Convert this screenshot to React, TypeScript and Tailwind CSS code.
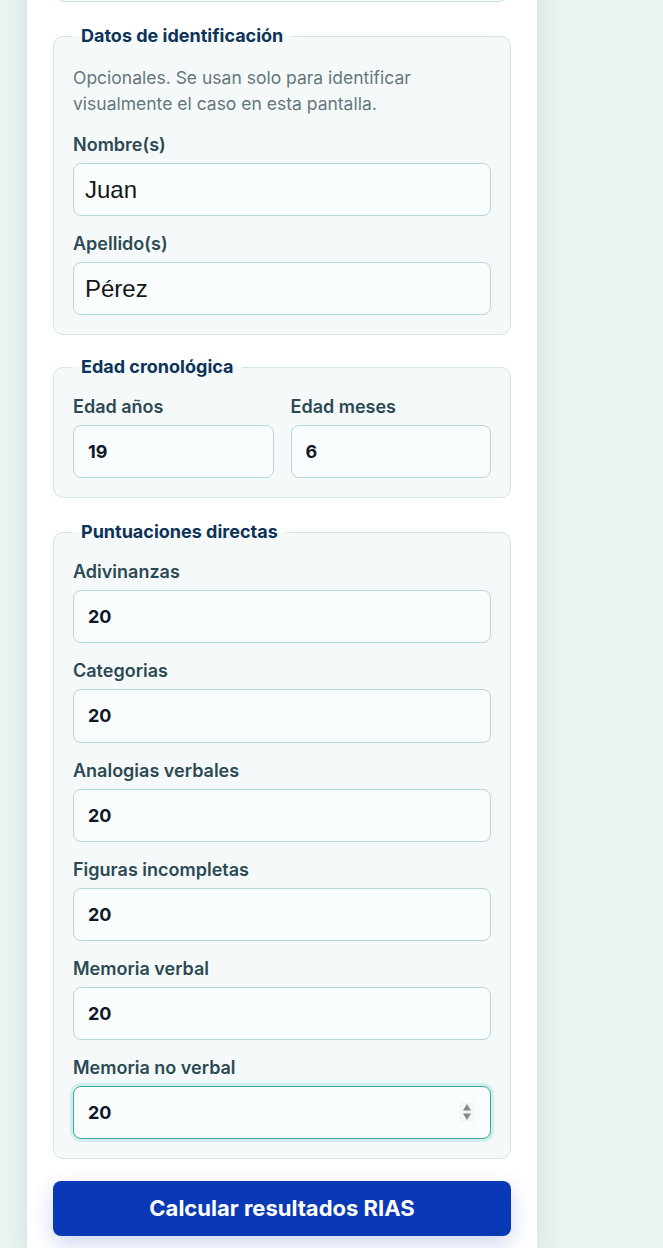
import React from "react";

const sans = { fontFamily: "Inter, 'Noto Sans', sans-serif" };

function Legend({ children }: { children: React.ReactNode }) {
  return (
    <legend className="px-2 text-[18px] leading-6 font-bold text-[#0d3358]">
      {children}
    </legend>
  );
}

function Label({ children }: { children: React.ReactNode }) {
  return (
    <label className="block text-[18px] leading-6 font-semibold text-[#2c4a53] mb-1.5">
      {children}
    </label>
  );
}

function NumInput({ value, focused }: { value: string; focused?: boolean }) {
  if (focused) {
    return (
      <div className="relative">
        <input
          readOnly
          value={value}
          className="block w-full h-[53.2px] rounded-lg border border-[#3aa7a3] bg-[#fafdfd] px-[14px] text-[18px] font-bold text-[#111827] outline-none ring-[3px] ring-[#d2eeed]"
          style={sans}
        />
        <div className="absolute right-[17px] top-[16px] flex h-[20px] w-[14px] items-center justify-center bg-[#f4f6f6]">
          <svg width="10" height="18" viewBox="0 0 10 18">
            <path d="M5 1 L9 7.5 H1 Z" fill="#8a8a8a" />
            <path d="M5 17 L9 10.5 H1 Z" fill="#8a8a8a" />
          </svg>
        </div>
      </div>
    );
  }
  return (
    <input
      readOnly
      value={value}
      className="block w-full h-[53.2px] rounded-lg border border-[#b5d8d8] bg-[#fafdfd] px-[14px] text-[18px] font-bold text-[#111827] outline-none"
      style={sans}
    />
  );
}

function TextInput({ value }: { value: string }) {
  return (
    <input
      readOnly
      value={value}
      className="block w-full h-[53px] rounded-lg border border-[#b5d8d8] bg-[#fafdfd] px-[11px] text-[24px] text-[#161616] outline-none"
      style={{ fontFamily: "'Liberation Sans', Arial, sans-serif" }}
    />
  );
}

const scores = [
  "Adivinanzas",
  "Categorias",
  "Analogias verbales",
  "Figuras incompletas",
  "Memoria verbal",
  "Memoria no verbal",
];

export default function App() {
  return (
    <div className="min-h-screen bg-[#eaf3f2] overflow-hidden" style={sans}>
      <div className="ml-[27px] w-[510px] min-h-[1300px] bg-white px-[26px] shadow-[0_0_24px_rgba(20,70,80,0.10)]">
        <div className="mx-[4px] -mt-[38px] h-[40px] rounded-lg border border-[#bfe0de] bg-[#fafdfd]" />

        <div className="mt-[22px] flex flex-col">
          <fieldset className="rounded-[10px] border border-[#d3e6e6] bg-[#f5f9f9] px-[19px] pb-[19px] pt-[17px]">
            <Legend>Datos de identificación</Legend>
            <p className="text-[17.5px] leading-[26px] text-[#65777d]">
              Opcionales. Se usan solo para identificar visualmente el caso en esta pantalla.
            </p>
            <div className="mt-4 flex flex-col gap-4">
              <div>
                <Label>Nombre(s)</Label>
                <TextInput value="Juan" />
              </div>
              <div>
                <Label>Apellido(s)</Label>
                <TextInput value="Pérez" />
              </div>
            </div>
          </fieldset>

          <fieldset className="mt-5 rounded-[10px] border border-[#d3e6e6] bg-[#f5f9f9] px-[19px] pb-[19px] pt-[16px]">
            <Legend>Edad cronológica</Legend>
            <div className="grid grid-cols-2 gap-[17px]">
              <div>
                <Label>Edad años</Label>
                <NumInput value="19" />
              </div>
              <div>
                <Label>Edad meses</Label>
                <NumInput value="6" />
              </div>
            </div>
          </fieldset>

          <fieldset className="mt-[22px] rounded-[10px] border border-[#d3e6e6] bg-[#f5f9f9] px-[19px] pb-[19px] pt-[16px]">
            <Legend>Puntuaciones directas</Legend>
            <div className="flex flex-col gap-4">
              {scores.map((s, i) => (
                <div key={s}>
                  <Label>{s}</Label>
                  <NumInput value="20" focused={i === scores.length - 1} />
                </div>
              ))}
            </div>
          </fieldset>
        </div>

        <button className="mt-[22px] block w-full h-[55px] rounded-lg bg-[#0939b7] text-[22px] font-bold text-white shadow-[0_8px_22px_rgba(9,57,183,0.20)]">
          Calcular resultados RIAS
        </button>
      </div>
    </div>
  );
}
